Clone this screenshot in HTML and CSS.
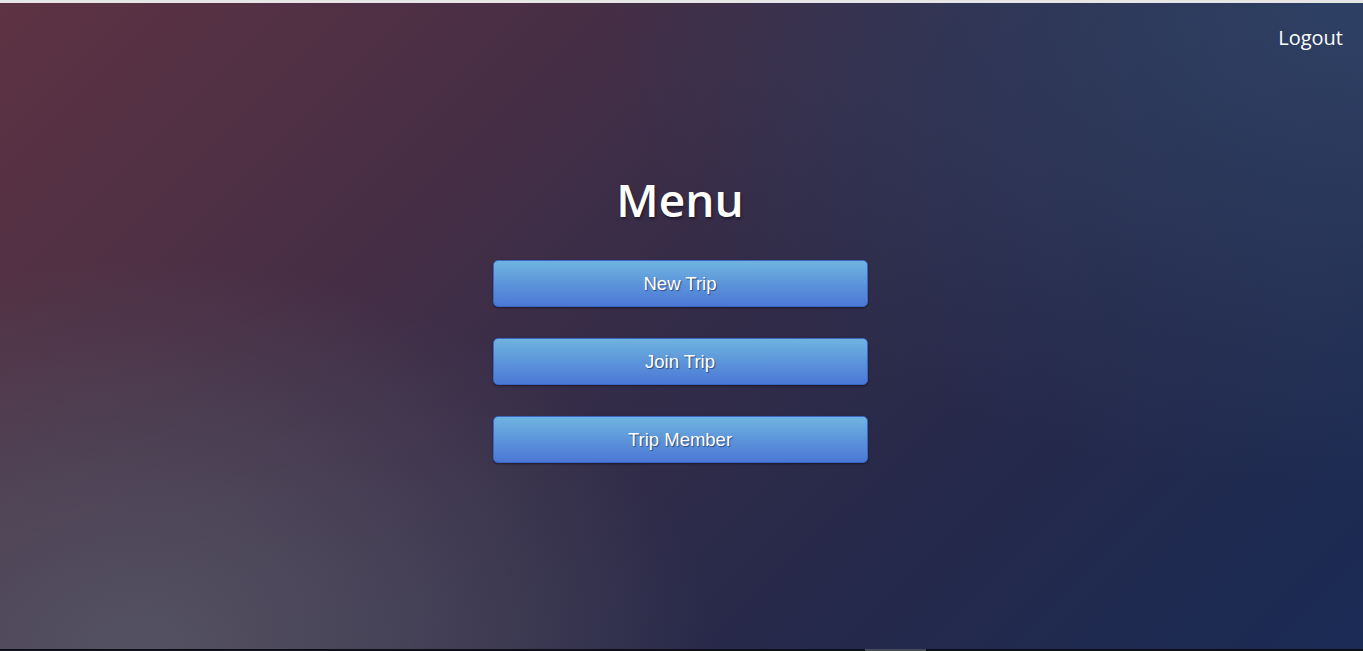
FILE: index.html
```html
<!DOCTYPE html>
<html lang="en">
<head>
<meta charset="utf-8">
<title>Menu</title>
<link rel="stylesheet" href="styles.css">
</head>
<body>
<div class="topstrip"></div>
<div class="page">
  <header class="header">
    <a class="logout" href="#">Logout</a>
  </header>
  <main class="main">
    <h1 class="title">Menu</h1>
    <nav class="menu">
      <button class="btn">New Trip</button>
      <button class="btn">Join Trip</button>
      <button class="btn">Trip Member</button>
    </nav>
  </main>
</div>
<div class="bottomstrip"><div class="thumb"></div></div>
</body>
</html>
```
FILE: styles.css
```css
html, body {
  margin: 0;
  padding: 0;
  height: 651px;
  overflow: hidden;
}
body {
  display: flex;
  flex-direction: column;
  background: #111;
  font-family: "Open Sans", "Liberation Sans", sans-serif;
}
.topstrip {
  height: 3px;
  background: #e6e6e6;
  flex: none;
}
.page {
  flex: 1;
  display: flex;
  flex-direction: column;
  background-color: #1b2b55;
  background-image:
    radial-gradient(ellipse 42% 60% at 10% 100%, rgba(84,82,98,1) 0%, rgba(84,82,98,0.6) 45%, rgba(84,82,98,0) 100%),
    radial-gradient(ellipse 55% 75% at 100% 0%, rgba(46,66,102,0.95) 0%, rgba(46,66,102,0) 100%),
    linear-gradient(135deg, #5e3343 0%, #4b2f45 25%, #332c48 50%, #26294a 70%, #1a2b55 100%);
}
.header {
  display: flex;
  justify-content: flex-end;
  padding: 21px 20px 0;
}
.logout {
  color: #ffffff;
  font-size: 20px;
  text-decoration: none;
  line-height: 27px;
}
.main {
  display: flex;
  flex-direction: column;
  align-items: center;
  padding-top: 116px;
  padding-right: 3px;
}
.title {
  margin: 0;
  color: #ffffff;
  font-family: "Open Sans", sans-serif;
  font-weight: 600;
  font-size: 46px;
  line-height: 65px;
  text-shadow: 1px 2px 3px rgba(0, 0, 0, 0.45);
}
.menu {
  margin-top: 28px;
  display: flex;
  flex-direction: column;
  gap: 31px;
}
.btn {
  width: 375px;
  height: 47px;
  box-sizing: border-box;
  border: 1px solid #3d66c4;
  border-radius: 5px;
  background: linear-gradient(to bottom, #6fb4e0 0%, #5c95da 50%, #4b78d6 100%);
  box-shadow: 0 1px 2px rgba(0, 0, 0, 0.45);
  color: #ffffff;
  font-family: "Liberation Sans", Arial, sans-serif;
  font-size: 18.5px;
  text-shadow: 1px 1px 1px rgba(20, 30, 70, 0.6);
  padding: 0;
  cursor: pointer;
}
.bottomstrip {
  height: 2px;
  flex: none;
  background: #0f0f17;
  display: flex;
  padding-left: 865px;
}
.thumb {
  width: 61px;
  height: 2px;
  background: #4a4a52;
}
```
